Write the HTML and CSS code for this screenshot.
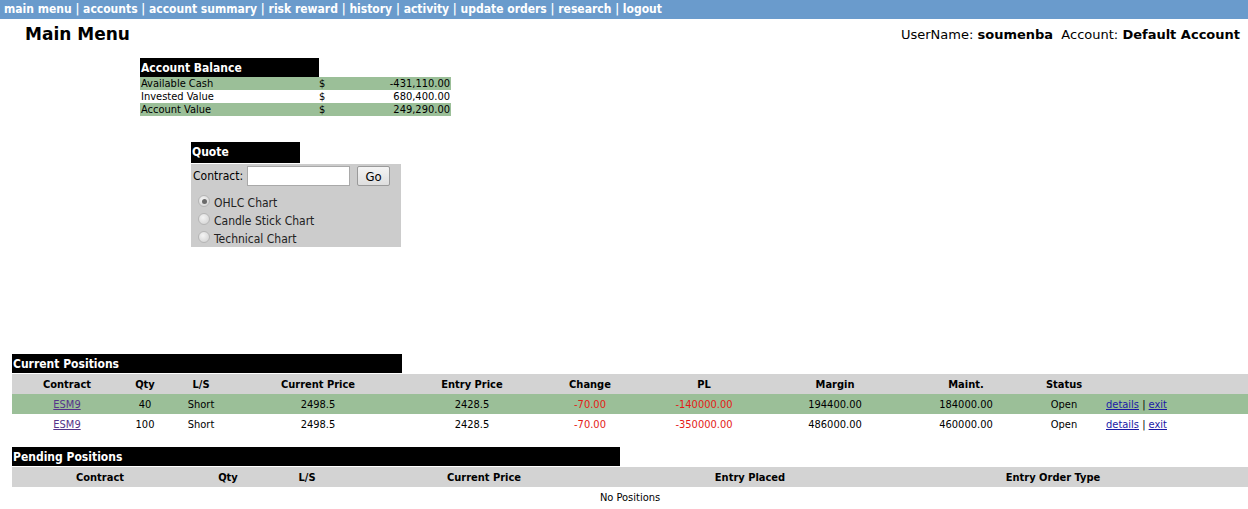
FILE: index.html
```html
<!DOCTYPE html>
<html>
<head>
<meta charset="utf-8">
<title>Main Menu</title>
<link rel="stylesheet" href="styles.css">
</head>
<body>
<div class="topnav">
  <a href="#">main menu</a> | <a href="#">accounts</a> | <a href="#">account summary</a> | <a href="#">risk reward</a> | <a href="#">history</a> | <a href="#">activity</a> | <a href="#">update orders</a> | <a href="#">research</a> | <a href="#">logout</a>
</div>

<div class="pagehead">
  <h1 class="title">Main Menu</h1>
  <div class="userinfo">UserName: <b>soumenba</b>&nbsp; Account: <b>Default Account</b></div>
</div>

<table class="balance">
  <tr><th class="boxhead">Account Balance</th><td></td><td></td></tr>
  <tr class="alt"><td class="lbl">Available Cash</td><td class="cur">$</td><td class="amt">-431,110.00</td></tr>
  <tr><td class="lbl">Invested Value</td><td class="cur">$</td><td class="amt">680,400.00</td></tr>
  <tr class="alt"><td class="lbl">Account Value</td><td class="cur">$</td><td class="amt">249,290.00</td></tr>
</table>

<div class="quote">
  <div class="boxhead quotehead">Quote</div>
  <form class="quotebox">
    <div class="contract-row">
      <label>Contract:</label>
      <input type="text" class="field">
      <button type="button" class="gobtn">Go</button>
    </div>
    <label class="opt"><span class="radio on"></span>OHLC Chart</label>
    <label class="opt"><span class="radio"></span>Candle Stick Chart</label>
    <label class="opt"><span class="radio"></span>Technical Chart</label>
  </form>
</div>

<section class="positions current">
  <div class="boxhead sechead w-current">Current Positions</div>
  <table class="grid">
    <colgroup>
      <col style="width:110px"><col style="width:46px"><col style="width:66px"><col style="width:168px">
      <col style="width:140px"><col style="width:96px"><col style="width:132px"><col style="width:130px">
      <col style="width:132px"><col style="width:64px"><col>
    </colgroup>
    <tr class="hdr">
      <th>Contract</th><th>Qty</th><th>L/S</th><th>Current Price</th><th>Entry Price</th><th>Change</th><th>PL</th><th>Margin</th><th>Maint.</th><th>Status</th><th></th>
    </tr>
    <tr class="alt">
      <td><a href="#" class="sym">ESM9</a></td><td>40</td><td>Short</td><td>2498.5</td><td>2428.5</td><td class="neg">-70.00</td><td class="neg">-140000.00</td><td>194400.00</td><td>184000.00</td><td>Open</td><td class="acts"><a href="#">details</a> | <a href="#">exit</a></td>
    </tr>
    <tr>
      <td><a href="#" class="sym">ESM9</a></td><td>100</td><td>Short</td><td>2498.5</td><td>2428.5</td><td class="neg">-70.00</td><td class="neg">-350000.00</td><td>486000.00</td><td>460000.00</td><td>Open</td><td class="acts"><a href="#">details</a> | <a href="#">exit</a></td>
    </tr>
  </table>
</section>

<section class="positions pending">
  <div class="boxhead sechead w-pending">Pending Positions</div>
  <table class="grid">
    <colgroup>
      <col style="width:176px"><col style="width:80px"><col style="width:78px"><col style="width:276px">
      <col style="width:256px"><col style="width:350px"><col>
    </colgroup>
    <tr class="hdr">
      <th>Contract</th><th>Qty</th><th>L/S</th><th>Current Price</th><th>Entry Placed</th><th>Entry Order Type</th><th></th>
    </tr>
    <tr>
      <td colspan="7" class="empty">No Positions</td>
    </tr>
  </table>
</section>
</body>
</html>
```

FILE: styles.css
```css
html, body {
  margin: 0;
  padding: 0;
  background: #fff;
}

body {
  font-family: "DejaVu Sans Condensed", "DejaVu Sans", sans-serif;
  font-size: 11px;
  color: #000;
}

/* top navigation strip */
.topnav {
  background: #6a9bcc;
  color: #fff;
  height: 19px;
  line-height: 19px;
  padding-left: 4px;
  font-size: 12px;
  font-weight: bold;
  white-space: nowrap;
}
.topnav a {
  color: #fff;
  text-decoration: none;
}

/* page title + user line */
.pagehead {
  display: flex;
  justify-content: space-between;
  align-items: flex-end;
  padding: 5px 8px 0 25px;
  height: 20px;
}
.title {
  margin: 0;
  font-family: "DejaVu Sans", sans-serif;
  font-size: 17px;
  font-weight: bold;
  line-height: 20px;
}
.userinfo {
  font-family: "DejaVu Sans", sans-serif;
  font-size: 13px;
  line-height: 18px;
}

/* black caption bars */
.boxhead {
  background: #000;
  color: #fff;
  font-weight: bold;
  font-size: 12px;
  text-align: left;
}

/* account balance */
.balance {
  margin: 14px 0 0 140px;
  border-collapse: collapse;
  width: 311px;
}
.balance th.boxhead {
  width: 178px;
  height: 18px;
  padding: 1px 0 0 1px;
  vertical-align: middle;
}
.balance td {
  padding: 0;
  height: 13px;
  line-height: 13px;
}
.balance .lbl { padding-left: 1px; }
.balance .amt { text-align: right; padding-right: 1px; }
.balance .cur { width: 12px; }
.alt { background: #9bbf98; }

/* quote panel */
.quote {
  margin: 26px 0 0 191px;
}
.quotehead {
  width: 108px;
  height: 21px;
  line-height: 21px;
  padding-left: 1px;
}
.quotebox {
  margin: 1px 0 0;
  width: 208px;
  height: 81px;
  padding: 2px 0 0 2px;
  background: #cccccc;
  box-sizing: content-box;
}
.contract-row {
  display: flex;
  align-items: center;
  height: 20px;
  margin-bottom: 8px;
  font-size: 12px;
}
.contract-row label { width: 54px; }
.field {
  width: 103px;
  height: 20px;
  box-sizing: border-box;
  border: 1px solid #a9a9a9;
  background: #fff;
  margin: 0 7px 0 0;
  padding: 0;
}
.gobtn {
  width: 33px;
  height: 20px;
  box-sizing: border-box;
  border: 1px solid #9a9a9a;
  border-radius: 2px;
  background: linear-gradient(#f4f4f4, #dedede);
  font-family: inherit;
  font-size: 13px;
  padding: 0;
  color: #000;
}
.opt {
  display: flex;
  align-items: center;
  height: 18px;
  font-size: 12px;
  color: #222;
}
.radio {
  width: 12px;
  height: 12px;
  border-radius: 50%;
  background: radial-gradient(circle at 40% 35%, #f4f4f4, #cfcfcf);
  border: 1px solid #b5b5b5;
  box-sizing: border-box;
  margin: 0 4px 4px 5px;
  position: relative;
}
.radio.on::after {
  content: "";
  position: absolute;
  left: 2.5px;
  top: 2.5px;
  width: 5px;
  height: 5px;
  border-radius: 50%;
  background: #6a6a6a;
}

/* positions tables */
.positions {
  margin-left: 12px;
  width: 1236px;
}
.current { margin-top: 107px; }
.pending { margin-top: 13px; }
.sechead {
  height: 19px;
  line-height: 20px;
  padding-left: 1px;
}
.w-current { width: 389px; }
.w-pending { width: 607px; }
.grid {
  width: 1236px;
  border-collapse: collapse;
  table-layout: fixed;
  margin-top: 1px;
}
.grid th, .grid td {
  padding: 0;
  height: 20px;
  text-align: center;
  white-space: nowrap;
}
.grid .hdr { background: #d3d3d3; }
.grid th { font-weight: bold; }
.grid .neg { color: #e41b17; }
.grid .acts { text-align: left; padding-left: 10px; }
.grid a { color: #1a1aa6; }
.grid a.sym { color: #55338a; }
.grid .empty { height: 20px; }
```
